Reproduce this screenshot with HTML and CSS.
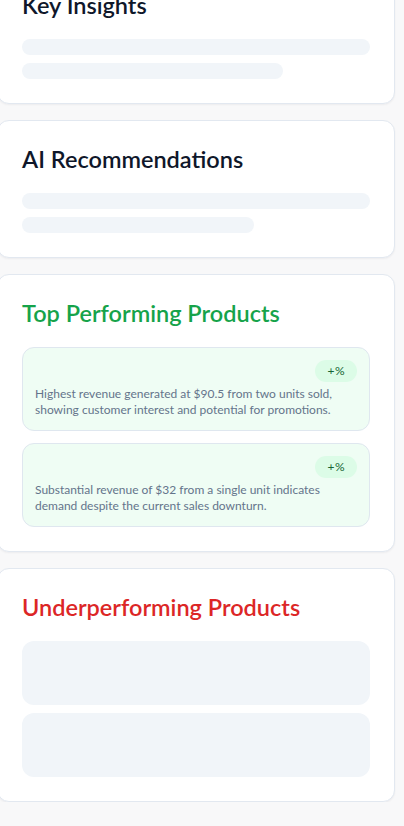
FILE: index.html
```html
<!DOCTYPE html>
<html lang="en">
<head>
<meta charset="utf-8">
<title>Insights</title>
<link rel="stylesheet" href="styles.css">
</head>
<body>
<main class="page">
  <section class="card">
    <h2 class="card-title">Key Insights</h2>
    <div class="lines">
      <div class="line line-full"></div>
      <div class="line line-key"></div>
    </div>
  </section>

  <section class="card">
    <h2 class="card-title">AI Recommendations</h2>
    <div class="lines">
      <div class="line line-full"></div>
      <div class="line line-ai"></div>
    </div>
  </section>

  <section class="card">
    <h2 class="card-title title-green">Top Performing Products</h2>
    <div class="items">
      <div class="item item-good">
        <div class="item-head"><span class="badge badge-good">+%</span></div>
        <p class="item-text">Highest revenue generated at $90.5 from two units sold, showing customer interest and potential for promotions.</p>
      </div>
      <div class="item item-good">
        <div class="item-head"><span class="badge badge-good">+%</span></div>
        <p class="item-text">Substantial revenue of $32 from a single unit indicates demand despite the current sales downturn.</p>
      </div>
    </div>
  </section>

  <section class="card">
    <h2 class="card-title title-red">Underperforming Products</h2>
    <div class="items items-tight">
      <div class="block"></div>
      <div class="block"></div>
    </div>
  </section>
</main>
</body>
</html>
```

FILE: styles.css
```css
* { box-sizing: border-box; }
html, body { margin: 0; padding: 0; }
body {
  background: #f8f8f9;
  font-family: "Lato", "Open Sans", sans-serif;
  color: #0f172a;
  overflow: hidden;
}
.page {
  display: flex;
  flex-direction: column;
  gap: 16px;
  width: 398px;
  margin: -34px 0 0 -3px;
}
.card {
  background: #ffffff;
  border: 1px solid #e2e8f0;
  border-radius: 12px;
  box-shadow: 0 1px 2px rgba(15, 23, 42, 0.05);
  padding: 24px;
}
.card-title {
  margin: 0 0 20px;
  font-size: 23.5px;
  line-height: 28px;
  font-weight: 600;
  color: #0f172a;
}
.title-green { color: #16a34a; }
.title-red { color: #dc2626; }
.lines { display: flex; flex-direction: column; gap: 8px; }
.line { height: 16px; border-radius: 9999px; background: #f1f5f9; }
.line-full { width: 100%; }
.line-key { width: 75%; }
.line-ai { width: 66.7%; }
.items { display: flex; flex-direction: column; gap: 12px; }
.items-tight { gap: 8px; }
.item {
  border-radius: 12px;
  padding: 12px;
  border: 1px solid #dfe7ef;
}
.item-good { background: #effdf4; }
.item-head { display: flex; justify-content: flex-end; }
.badge {
  display: inline-block;
  font-size: 12px;
  line-height: 16px;
  padding: 3px 12px;
  border-radius: 9999px;
  letter-spacing: 0.5px;
}
.badge-good { background: #dcfce7; color: #166534; }
.item-text {
  margin: 4px 0 0;
  font-size: 12px;
  line-height: 16px;
  color: #64748b;
}
.block { height: 64px; border-radius: 12px; background: #f1f5f9; }
```
